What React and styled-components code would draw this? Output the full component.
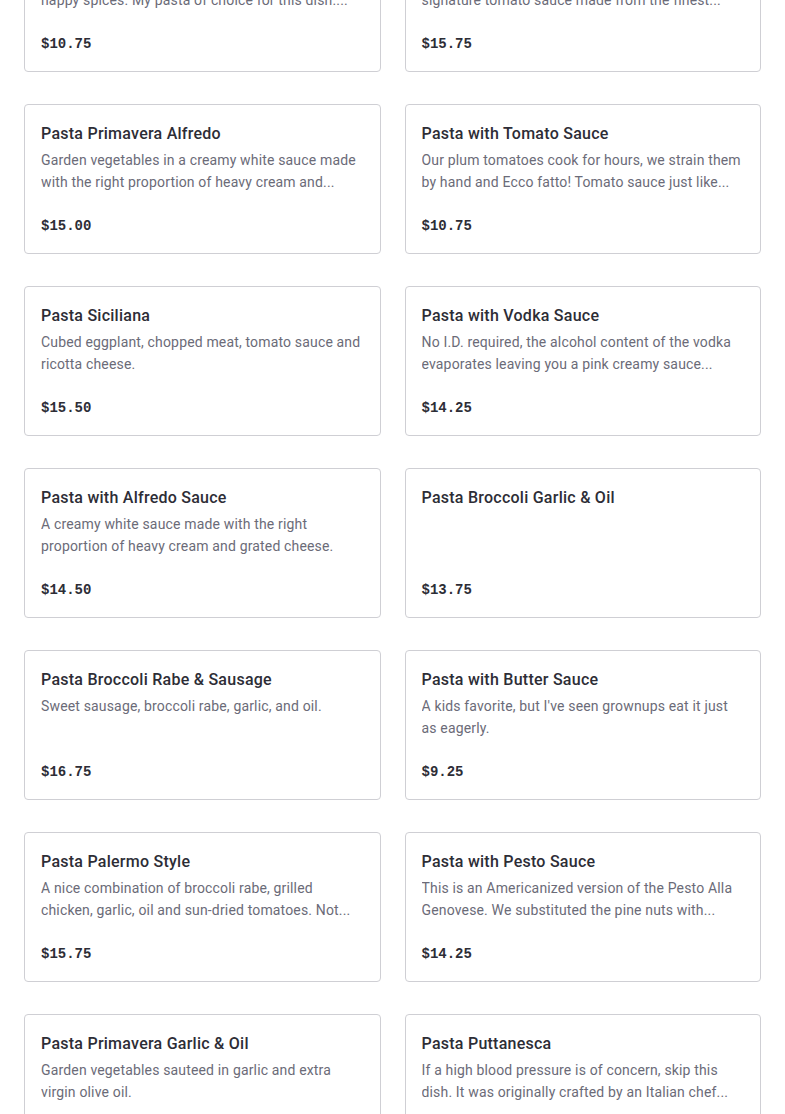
import styled, { createGlobalStyle } from "styled-components";

const GlobalStyle = createGlobalStyle`
  html, body {
    margin: 0;
    padding: 0;
    background: #ffffff;
  }
  body {
    font-family: Roboto, "Noto Sans", sans-serif;
    color: #2d2d36;
  }
`;

const MENU = [
  {
    name: "Pasta Arrabbiata",
    description:
      "Spicy tomato sauce with garlic, hot pepper and happy spices. My pasta of choice for this dish....",
    price: 10.75,
  },
  {
    name: "Pasta Marinara",
    description:
      "Fresh basil and garlic simmered slowly in our signature tomato sauce made from the finest...",
    price: 15.75,
  },
  {
    name: "Pasta Primavera Alfredo",
    description:
      "Garden vegetables in a creamy white sauce made with the right proportion of heavy cream and...",
    price: 15.0,
  },
  {
    name: "Pasta with Tomato Sauce",
    description:
      "Our plum tomatoes cook for hours, we strain them by hand and Ecco fatto! Tomato sauce just like...",
    price: 10.75,
  },
  {
    name: "Pasta Siciliana",
    description: "Cubed eggplant, chopped meat, tomato sauce and ricotta cheese.",
    price: 15.5,
  },
  {
    name: "Pasta with Vodka Sauce",
    description:
      "No I.D. required, the alcohol content of the vodka evaporates leaving you a pink creamy sauce...",
    price: 14.25,
  },
  {
    name: "Pasta with Alfredo Sauce",
    description:
      "A creamy white sauce made with the right proportion of heavy cream and grated cheese.",
    price: 14.5,
  },
  {
    name: "Pasta Broccoli Garlic & Oil",
    description: "",
    price: 13.75,
  },
  {
    name: "Pasta Broccoli Rabe & Sausage",
    description: "Sweet sausage, broccoli rabe, garlic, and oil.",
    price: 16.75,
  },
  {
    name: "Pasta with Butter Sauce",
    description:
      "A kids favorite, but I've seen grownups eat it just as eagerly.",
    price: 9.25,
  },
  {
    name: "Pasta Palermo Style",
    description:
      "A nice combination of broccoli rabe, grilled chicken, garlic, oil and sun-dried tomatoes. Not...",
    price: 15.75,
  },
  {
    name: "Pasta with Pesto Sauce",
    description:
      "This is an Americanized version of the Pesto Alla Genovese. We substituted the pine nuts with...",
    price: 14.25,
  },
  {
    name: "Pasta Primavera Garlic & Oil",
    description:
      "Garden vegetables sauteed in garlic and extra virgin olive oil.",
    price: 15.25,
  },
  {
    name: "Pasta Puttanesca",
    description:
      "If a high blood pressure is of concern, skip this dish. It was originally crafted by an Italian chef...",
    price: 15.25,
  },
];

const Page = styled.main`
  padding: 0 24px 40px;
  overflow: hidden;
`;

const Grid = styled.section`
  display: grid;
  grid-template-columns: 1fr 1fr;
  column-gap: 24px;
  row-gap: 32px;
  margin-top: -78px;
`;

const Card = styled.article`
  box-sizing: border-box;
  display: flex;
  flex-direction: column;
  height: 150px;
  padding: 16px;
  background: #ffffff;
  border: 1px solid #cfcfd4;
  border-radius: 4px;
  min-width: 0;
`;

const Name = styled.h3`
  margin: 0;
  font-size: 16px;
  font-weight: 500;
  line-height: 25px;
  letter-spacing: 0.25px;
  color: #2d2d36;
  white-space: nowrap;
  overflow: hidden;
  text-overflow: ellipsis;
`;

const Description = styled.p`
  margin: 3px 0 0;
  font-size: 14px;
  line-height: 22px;
  letter-spacing: 0.16px;
  color: #6b6b78;
  display: -webkit-box;
  -webkit-line-clamp: 2;
  -webkit-box-orient: vertical;
  overflow: hidden;
`;

const Price = styled.div`
  margin-top: auto;
  font-family: "Liberation Mono", "DejaVu Sans Mono", monospace;
  font-size: 14px;
  font-weight: 700;
  line-height: 22px;
  color: #2d2d36;
`;

const formatPrice = (value) => `$${value.toFixed(2)}`;

function MenuCard({ item }) {
  return (
    <Card>
      <Name>{item.name}</Name>
      {item.description && <Description>{item.description}</Description>}
      <Price>{formatPrice(item.price)}</Price>
    </Card>
  );
}

export default function App() {
  return (
    <>
      <GlobalStyle />
      <Page>
        <Grid>
          {MENU.map((item) => (
            <MenuCard key={item.name} item={item} />
          ))}
        </Grid>
      </Page>
    </>
  );
}
